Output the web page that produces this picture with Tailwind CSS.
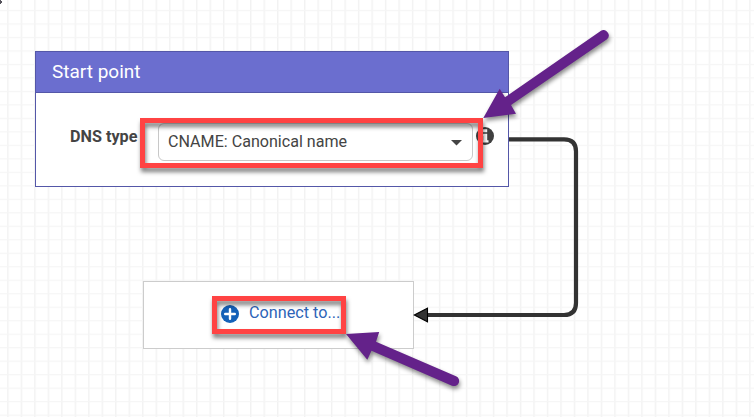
<!DOCTYPE html>
<html lang="en">
<head>
<meta charset="utf-8">
<title>DNS flow</title>
<script src="https://cdn.jsdelivr.net/npm/@tailwindcss/browser@4"></script>
</head>
<body class="bg-white font-[Roboto,sans-serif]">
<main class="relative w-[754px] h-[417px] overflow-hidden">
  <!-- Canvas grid -->
  <svg class="absolute inset-0" width="754" height="417">
    <defs>
      <pattern id="grid" x="7.2" y="9.9" width="13.49" height="13.49" patternUnits="userSpaceOnUse">
        <path d="M.7 0V13.49" stroke="#f2f2f2" stroke-width="1.4"/>
        <path d="M0 .6H13.49" stroke="#f5f5f5" stroke-width="1.2"/>
      </pattern>
    </defs>
    <rect width="754" height="417" fill="url(#grid)"/>
    <path d="M0 0h1v1h1v2H1v1H0z" fill="#55535c"/>
  </svg>

  <!-- Start node -->
  <section class="absolute left-[35px] top-[51px] w-[474px] h-[136px] border border-[#5457a8] bg-white flex flex-col">
    <header class="h-[41px] shrink-0 bg-[#6b6ecf] border-b border-[#5457a8] pl-4 pb-[2px] flex items-center text-white text-[19px] leading-none">
      <span>Start point</span>
    </header>
    <div class="flex items-start pt-[31px] pl-[34px] text-[#444] text-base">
      <label class="w-[88px] shrink-0 font-bold text-[16.2px] leading-[26px]">DNS type</label>
      <div class="w-[315px] h-[38px] -mt-[1px] border border-[#c8c8c8] rounded-[6px] flex items-center justify-between pl-[9px] pr-[10px]">
        <span class="text-[16.1px] leading-none mt-[1px]">CNAME: Canonical name</span>
        <svg class="mt-[2px]" width="11" height="6"><path d="M0 0H11L5.5 5.5z" fill="#444"/></svg>
      </div>
      <svg class="ml-[3px] mt-[3px] shrink-0" width="18" height="18" viewBox="0 0 18 18">
        <circle cx="9" cy="9" r="9" fill="#404040"/>
        <path d="M7 2.2h4.2v3H7zM6 6.8h5.2v6.4h1.3v2.2H5.8v-2.2h1.4V9H6z" fill="#fff"/>
      </svg>
    </div>
  </section>

  <!-- Target node -->
  <section class="absolute left-[143px] top-[281px] w-[271px] h-[68px] border border-[#ccc] bg-white flex items-center pl-[77px]">
    <svg class="shrink-0 -mt-[3px]" width="18" height="18" viewBox="0 0 18 18">
      <circle cx="9" cy="9" r="9" fill="#1461b8"/>
      <path d="M9 4.2V13.8M4.2 9H13.8" stroke="#fff" stroke-width="2.4" stroke-linecap="round"/>
    </svg>
    <a class="ml-[10px] -mt-[4px] text-[#2d64b8] text-[16.2px] leading-none whitespace-nowrap">Connect to...</a>
  </section>

  <!-- Connector and callouts -->
  <svg class="absolute inset-0" width="754" height="417" viewBox="0 0 754 417">
    <path d="M509 139.3H564Q576 139.3 576 151.3V303Q576 315 564 315H427" fill="none" stroke="#333" stroke-width="4.2"/>
    <path d="M414.3 315L427.5 308.2V321.8z" fill="#333" stroke="#000" stroke-width="1.1"/>
    <g fill="none" stroke="#ff4343" stroke-width="5" class="drop-shadow-[1px_4px_2px_rgba(0,0,0,0.5)]">
      <rect x="142.5" y="120.5" width="338" height="45"/>
      <rect x="214.5" y="298.5" width="129" height="33"/>
    </g>
    <g fill="#64228a" class="drop-shadow-[1px_3px_2px_rgba(0,0,0,0.45)]">
      <path d="M483.3 118L499.7 88.8L505 97.3L601 30.7A5.3 5.3 0 0 1 607 39.3L511 105L516 113.7z"/>
      <path d="M346 334L379.2 332L376 341.8L456 376.3A5 5 0 0 1 452 385.7L371.5 350.7L367.3 359.8z"/>
    </g>
  </svg>
</main>
</body>
</html>
